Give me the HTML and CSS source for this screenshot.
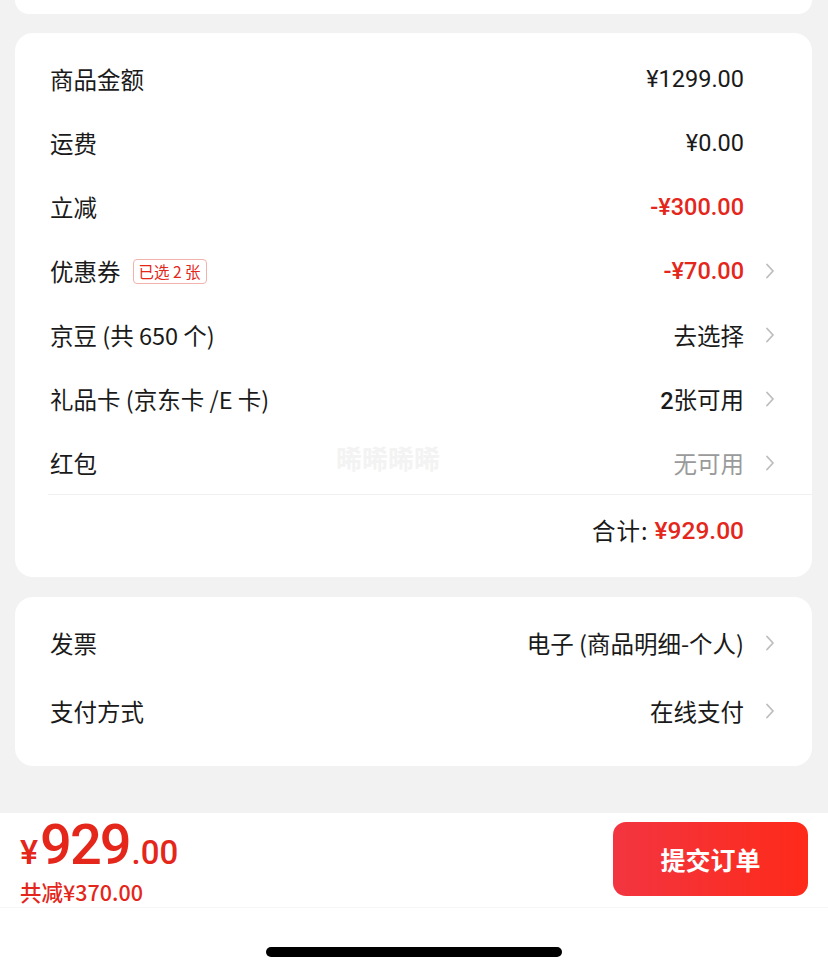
FILE: index.html
```html
<!DOCTYPE html>
<html lang="zh">
<head>
<meta charset="utf-8">
<link rel="stylesheet" href="styles.css">
</head>
<body>
<div class="page">
  <div class="main">
    <div class="card card-top"></div>

    <div class="card card-sum">
      <div class="row"><span class="label">商品金额</span><span class="value num">¥1299.00</span><span class="chev hidden"></span></div>
      <div class="row"><span class="label">运费</span><span class="value num">¥0.00</span><span class="chev hidden"></span></div>
      <div class="row"><span class="label">立减</span><span class="value num red">-¥300.00</span><span class="chev hidden"></span></div>
      <div class="row"><span class="label">优惠券<span class="badge">已选 2 张</span></span><span class="value num red">-¥70.00</span><span class="chev"><svg viewBox="0 0 10 16" width="10" height="16"><path d="M2 1.5 L8 8 L2 14.5" fill="none" stroke="#bdbdbd" stroke-width="1.8" stroke-linecap="round" stroke-linejoin="round"/></svg></span></div>
      <div class="row"><span class="label">京豆 (共 650 个)</span><span class="value">去选择</span><span class="chev"><svg viewBox="0 0 10 16" width="10" height="16"><path d="M2 1.5 L8 8 L2 14.5" fill="none" stroke="#bdbdbd" stroke-width="1.8" stroke-linecap="round" stroke-linejoin="round"/></svg></span></div>
      <div class="row"><span class="label">礼品卡 (京东卡 /E 卡)</span><span class="value"><span class="num strong">2</span>张可用</span><span class="chev"><svg viewBox="0 0 10 16" width="10" height="16"><path d="M2 1.5 L8 8 L2 14.5" fill="none" stroke="#bdbdbd" stroke-width="1.8" stroke-linecap="round" stroke-linejoin="round"/></svg></span></div>
      <div class="row row-last"><span class="label">红包</span><span class="value gray">无可用</span><span class="chev"><svg viewBox="0 0 10 16" width="10" height="16"><path d="M2 1.5 L8 8 L2 14.5" fill="none" stroke="#bdbdbd" stroke-width="1.8" stroke-linecap="round" stroke-linejoin="round"/></svg></span><span class="watermark">晞晞晞晞</span></div>
      <div class="total-row"><span class="total-label">合计:</span><span class="num red">¥929.00</span><span class="chev hidden"></span></div>
    </div>

    <div class="card card-pay">
      <div class="row row-tall"><span class="label">发票</span><span class="value">电子 (商品明细-个人)</span><span class="chev"><svg viewBox="0 0 10 16" width="10" height="16"><path d="M2 1.5 L8 8 L2 14.5" fill="none" stroke="#bdbdbd" stroke-width="1.8" stroke-linecap="round" stroke-linejoin="round"/></svg></span></div>
      <div class="row row-tall"><span class="label">支付方式</span><span class="value">在线支付</span><span class="chev"><svg viewBox="0 0 10 16" width="10" height="16"><path d="M2 1.5 L8 8 L2 14.5" fill="none" stroke="#bdbdbd" stroke-width="1.8" stroke-linecap="round" stroke-linejoin="round"/></svg></span></div>
    </div>
  </div>

  <div class="footer">
    <div class="bar">
      <div class="price-block">
        <div class="big-price"><span class="yen">¥</span><span class="int">929</span><span class="dec">.00</span></div>
        <div class="saved">共减¥370.00</div>
      </div>
      <button class="submit">提交订单</button>
    </div>
    <div class="home-area"><div class="home-indicator"></div></div>
  </div>
</div>
</body>
</html>
```
FILE: styles.css
```css
* { box-sizing: border-box; }
html, body { margin: 0; padding: 0; }
body {
  background: #f2f2f2;
  font-family: "Noto Sans CJK SC", "Noto Sans", sans-serif;
  color: #1a1a1a;
}
.page {
  width: 828px;
  height: 972px;
  display: flex;
  flex-direction: column;
}
.main {
  display: flex;
  flex-direction: column;
  gap: 19px;
  padding: 0 16px 0 15px;
}
.card {
  background: #fff;
  border-radius: 18px;
}
.card-top {
  height: 14px;
  border-radius: 0 0 18px 18px;
}
.card-sum {
  padding: 14px 0 12px 0;
}
.card-pay {
  margin-top: 1px;
  padding: 12px 0 21px 0;
}
.row {
  position: relative;
  display: flex;
  align-items: center;
  height: 64px;
  padding: 0 37px 0 35px;
  font-size: 23.5px;
}
.row-tall { height: 68px; }
.row-last {
  border-bottom: 1px solid #f0f0f0;
  margin-left: 33px;
  padding-left: 2px;
}
.label {
  flex: 1;
  display: flex;
  align-items: center;
  white-space: nowrap;
}
.value { white-space: nowrap; }
.num {
  font-family: "Roboto", "Noto Sans", sans-serif;
  letter-spacing: 0;
}
.strong { font-weight: 500; }
.red { color: #e4261b; font-weight: 500; }
.gray { color: #9a9a9a; }
.chev {
  width: 10px;
  height: 16px;
  margin-left: 21px;
  display: flex;
}
.chev.hidden { visibility: hidden; }
.badge {
  margin-left: 12px;
  font-size: 15.5px;
  color: #e4261b;
  border: 1px solid #f2b3ae;
  border-radius: 4px;
  padding: 0 5px;
  line-height: 23px;
}
.watermark {
  position: absolute;
  left: 288px;
  top: 8px;
  font-size: 26px;
  font-weight: 700;
  color: #f3f3f3;
}
.total-row {
  display: flex;
  align-items: center;
  justify-content: flex-end;
  height: 70px;
  padding: 0 37px 0 35px;
  font-size: 23.5px;
}
.total-row .num { font-size: 24.5px; }
.total-label { margin-right: 6px; letter-spacing: 1px; }
.footer {
  margin-top: auto;
  background: #fff;
  height: 159px;
  display: flex;
  flex-direction: column;
}
.bar {
  height: 95px;
  display: flex;
  align-items: center;
  justify-content: space-between;
  padding: 0 20px 0 20px;
  border-bottom: 1px solid #f6f6f6;
}
.price-block {
  display: flex;
  flex-direction: column;
  color: #e4261b;
  font-family: "Roboto", "Noto Sans", sans-serif;
  margin-top: 2px;
}
.big-price {
  display: flex;
  align-items: baseline;
  line-height: 54px;
}
.yen { font-size: 34px; font-weight: 500; margin-right: 2px; }
.int { font-size: 56px; font-weight: 500; letter-spacing: -2px; }
.dec { font-size: 33px; font-weight: 500; margin-left: 2px; }
.saved {
  font-family: "Noto Sans CJK SC", sans-serif;
  font-size: 21.5px;
  font-weight: 500;
  line-height: 24px;
}
.submit {
  width: 195px;
  height: 74px;
  border: none;
  border-radius: 13px;
  background: linear-gradient(90deg, #f23540, #fe2a1a);
  color: #fff;
  font-family: "Noto Sans CJK SC", sans-serif;
  font-size: 25px;
  font-weight: 700;
  margin-top: -2px;
}
.home-area {
  flex: 1;
  display: flex;
  justify-content: center;
  align-items: flex-start;
  padding-top: 39px;
}
.home-indicator {
  width: 296px;
  height: 10px;
  background: #000;
  border-radius: 5px;
}
```
